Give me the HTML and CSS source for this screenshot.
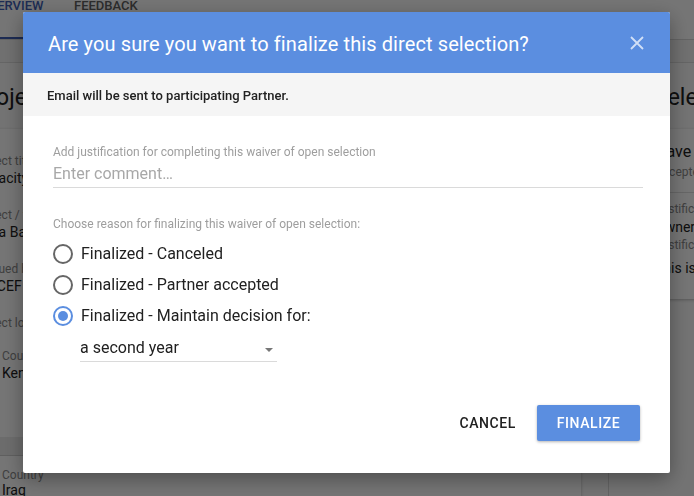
FILE: index.html
```html
<!DOCTYPE html>
<html lang="en">
<head>
<meta charset="utf-8">
<title>Finalize direct selection</title>
<link rel="stylesheet" href="styles.css">
</head>
<body>
<div class="page">
  <div class="tabs">
    <div class="tab tab-active">OVERVIEW</div>
    <div class="tab">FEEDBACK</div>
  </div>
  <div class="subbar"></div>
  <div class="content">
    <div class="col-left">
      <h2 class="col-title">Project details</h2>
      <div class="card">
        <div class="field"><div class="flabel">Project title</div><div class="fvalue">Capacity building</div></div>
        <div class="field"><div class="flabel">Project / focal point</div><div class="fvalue">Anna Barrett</div></div>
        <div class="field"><div class="flabel">Pursued by</div><div class="fvalue">UNICEF</div></div>
        <div class="field field-last"><div class="flabel">Project locations</div></div>
        <div class="loc"><div class="flabel">Country</div><div class="fvalue">Kenya</div></div>
        <div class="loc-gap"></div>
        <div class="loc loc-plain"><div class="flabel">Country</div><div class="fvalue">Iraq</div></div>
      </div>
    </div>
    <div class="col-right">
      <h2 class="col-title col-title-right">Selection</h2>
      <div class="card card-right">
        <div class="rc-head">
          <div class="rc-title">Have finalized</div>
          <div class="rc-sub">Accepted</div>
        </div>
        <div class="rc-body">
          <div class="flabel">Justification</div>
          <div class="fvalue rc-value">Owner</div>
          <div class="flabel">Justification note</div>
          <div class="fvalue rc-value rc-gap">This is a note</div>
        </div>
      </div>
    </div>
  </div>
</div>

<div class="overlay"></div>

<div class="dialog" role="dialog">
  <div class="dlg-header">
    <div class="dlg-title">Are you sure you want to finalize this direct selection?</div>
    <svg class="dlg-close" width="14" height="14" viewBox="0 0 14 14"><path d="M1 1L13 13M13 1L1 13" stroke="currentColor" stroke-width="1.8" fill="none"/></svg>
  </div>
  <div class="dlg-sub">Email will be sent to participating Partner.</div>
  <div class="dlg-body">
    <div class="lbl">Add justification for completing this waiver of open selection</div>
    <div class="input">Enter comment…</div>
    <div class="lbl lbl-reason">Choose reason for finalizing this waiver of open selection:</div>
    <div class="radios">
      <div class="radio-row"><span class="radio"></span><span class="radio-text">Finalized - Canceled</span></div>
      <div class="radio-row"><span class="radio"></span><span class="radio-text">Finalized - Partner accepted</span></div>
      <div class="radio-row"><span class="radio radio-on"></span><span class="radio-text">Finalized - Maintain decision for:</span></div>
    </div>
    <div class="select"><span>a second year</span><span class="arrow"></span></div>
    <div class="actions">
      <div class="btn btn-flat">CANCEL</div>
      <div class="btn btn-primary">FINALIZE</div>
    </div>
  </div>
</div>
</body>
</html>
```

FILE: styles.css
```css
* { box-sizing: border-box; }
html, body { margin: 0; padding: 0; }
body {
  width: 694px;
  height: 496px;
  overflow: hidden;
  font-family: Roboto, "Noto Sans", "Liberation Sans", sans-serif;
  background: #fafafa;
  color: #212121;
}
.page { width: 694px; height: 496px; overflow: hidden; white-space: nowrap; }

.tabs {
  height: 40px;
  display: flex;
  background: #fff;
  border-bottom: 1px solid #d8d8d8;
  margin-left: -32px;
}
.tab {
  padding: 0 12px;
  font-size: 13px;
  font-weight: 500;
  line-height: 14px;
  margin-top: -1px;
  color: #616161;
  height: 40px;
}
.tab-active { color: #3f5fb5; border-bottom: 2px solid #3f5fb5; width: 94px; }

.subbar { height: 23px; background: #f3f3f3; border-bottom: 1px solid #dcdcdc; }

.content { display: flex; margin-left: -26px; }
.col-left { width: 607px; flex: none; }
.col-right { flex: none; width: 140px; margin-left: 27px; border-left: 1px solid #d8d8d8; padding-left: 23px; }

.col-title {
  margin: 0;
  height: 66px;
  padding-top: 22px;
  font-size: 23px;
  font-weight: 400;
  line-height: 26px;
  color: #212121;
}
.col-title-right { padding-left: 22px; }

.card { background: #fff; padding-top: 24px; box-shadow: 0 1px 3px rgba(0,0,0,0.25); }
.field { height: 54px; }
.field-last { height: 24px; }
.flabel { font-size: 12px; line-height: 16px; color: #8a8a8a; }
.fvalue { font-size: 14px; line-height: 18px; color: #212121; }
.loc { height: 98px; background: #fff; padding: 9px 0 0 28px; }
.loc-gap { height: 19px; background: #ececec; border-bottom: 1px solid #d0d0d0; }
.loc-plain { padding-top: 11px; }
.loc-plain .fvalue { line-height: 14px; }

.card-right { padding: 0 0 0 23px; height: 170px; }
.rc-head { padding: 13px 0 12px; border-bottom: 1px solid #dedede; }
.rc-title { font-size: 16px; line-height: 20px; }
.rc-sub { font-size: 12px; line-height: 16px; color: #8a8a8a; margin-top: 2px; }
.rc-body { padding-top: 8px; }
.rc-value { line-height: 20px; }
.rc-gap { margin-top: 5px; }

.overlay { position: fixed; inset: 0; background: rgba(0,0,0,0.54); }

.dialog {
  position: fixed;
  left: 23px;
  top: 12px;
  width: 647px;
  height: 461px;
  background: #fff;
  border-radius: 2px;
  box-shadow: 0 6px 20px rgba(0,0,0,0.35);
  display: flex;
  flex-direction: column;
  overflow: hidden;
}
.dlg-header {
  height: 61px;
  background: #5b8ee0;
  display: flex;
  align-items: center;
  justify-content: space-between;
  padding: 3px 26px 0 25px;
}
.dlg-title { color: #fff; font-size: 20px; font-weight: 400; letter-spacing: 0.1px; }
.dlg-close { color: rgba(255,255,255,0.72); margin-top: -3px; }

.dlg-sub {
  height: 43px;
  background: #f5f5f5;
  display: flex;
  align-items: center;
  padding: 2px 0 0 24px;
  font-size: 13px;
  font-weight: 500;
  color: #212121;
}

.dlg-body {
  flex: 1;
  display: flex;
  flex-direction: column;
  padding: 29px 27px 32px 30px;
}
.lbl { font-size: 12px; line-height: 14px; color: #9e9e9e; }
.input {
  margin-top: 5px;
  font-size: 16px;
  line-height: 20px;
  padding-bottom: 3px;
  color: #a8a8a8;
  border-bottom: 1px solid #dadada;
}
.lbl-reason { margin-top: 29px; }
.radios { margin-top: 7px; }
.radio-row { height: 31px; display: flex; align-items: center; gap: 8px; }
.radio {
  width: 20px;
  height: 20px;
  border: 2px solid #666;
  border-radius: 50%;
  display: flex;
  align-items: center;
  justify-content: center;
}
.radio-on { border-color: #5b8ee0; }
.radio-on::after { content: ""; width: 10px; height: 10px; border-radius: 50%; background: #5b8ee0; }
.radio-text { font-size: 16px; color: #212121; }

.select {
  margin: 7px 0 0 27px;
  width: 197px;
  display: flex;
  align-items: center;
  justify-content: space-between;
  font-size: 16px;
  line-height: 20px;
  padding: 0 4px 3px 0;
  color: #212121;
  border-bottom: 1px solid #dadada;
}
.arrow {
  width: 0;
  height: 0;
  border-left: 4px solid transparent;
  border-right: 4px solid transparent;
  border-top: 4px solid #777;
  margin-top: 4px;
}

.actions { margin-top: auto; margin-right: 3px; display: flex; justify-content: flex-end; align-items: center; }
.btn {
  height: 36px;
  display: flex;
  align-items: center;
  justify-content: center;
  font-size: 14px;
  font-weight: 500;
  letter-spacing: 0.6px;
  border-radius: 2px;
}
.btn-flat { color: #212121; padding: 0 16px; margin-right: 5px; }
.btn-primary {
  width: 103px;
  background: #5b8ee0;
  color: #fff;
  box-shadow: 0 1px 3px rgba(0,0,0,0.3);
}
```
